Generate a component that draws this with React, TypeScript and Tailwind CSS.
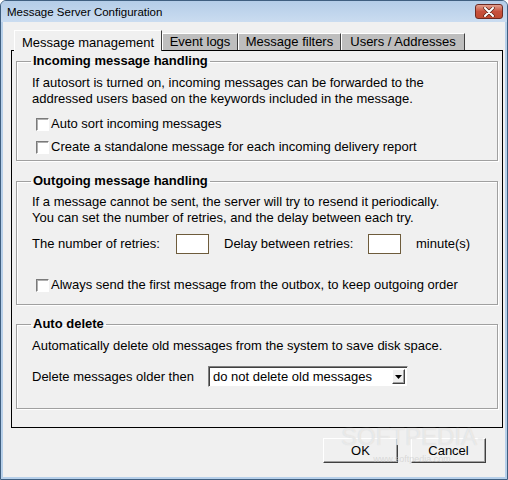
import React from 'react';

const tabs = [
  { label: 'Message management', width: 'w-[148px]', active: true },
  { label: 'Event logs', width: 'w-[76px]', active: false },
  { label: 'Message filters', width: 'w-[103px]', active: false },
  { label: 'Users / Addresses', width: 'w-[124px]', active: false },
];

function CheckBox({ label }: { label: string }) {
  return (
    <div className="flex items-center h-[16px] ml-[4px]">
      <span className="w-[13px] h-[13px] bg-white border border-t-[#7a7a7a] border-l-[#7a7a7a] border-b-white border-r-white shadow-[inset_1px_1px_0_#b0b0b0]" />
      <span className="ml-[2px]">{label}</span>
    </div>
  );
}

function GroupBox({ title, className, children }: { title: string; className?: string; children: React.ReactNode }) {
  return (
    <fieldset className={`border border-[#a0a0a0] shadow-[inset_1px_1px_0_#ffffff,1px_1px_0_#ffffff] ${className ?? ''}`}>
      <legend className="ml-[14px] px-[2px] font-bold leading-[16px]">{title}</legend>
      {children}
    </fieldset>
  );
}

function TextBox() {
  return <span className="w-[33px] h-[20px] bg-white border border-[#6e5c3c]" />;
}

function Button({ label }: { label: string }) {
  return (
    <button className="w-[75px] h-[25px] bg-[#f0f0f0] border border-t-white border-l-white border-b-[#404040] border-r-[#404040] shadow-[inset_-1px_-1px_0_#a0a0a0] text-[13px] leading-[16px]">
      {label}
    </button>
  );
}

export default function App() {
  return (
    <div className="relative w-[508px] h-[480px] flex flex-col bg-[#b7d0ea] border border-[#3f5f80] rounded-t-[6px] overflow-hidden font-['Liberation_Sans',Arial,sans-serif] text-[13px] text-black">
      {/* Title bar */}
      <div className="h-[21px] flex justify-between bg-gradient-to-b from-[#b4cde8] to-[#cadcf0] pl-[6px] pr-[4px]">
        <span className="self-center text-[11.5px] leading-[14px] mt-[1px]">Message Server Configuration</span>
        <span className="mt-[3px] w-[28px] h-[15px] rounded-[3px] border border-[#6e2a22] bg-gradient-to-b from-[#e2a08f] via-[#c7503c] to-[#c04a30] flex items-center justify-center">
          <svg width="12" height="10" viewBox="0 0 12 10">
            <path d="M2 1 L10 9 M10 1 L2 9" stroke="#5a2418" strokeWidth="3.4" strokeLinecap="round" />
            <path d="M2 1 L10 9 M10 1 L2 9" stroke="#ffffff" strokeWidth="2" strokeLinecap="round" />
          </svg>
        </span>
      </div>

      {/* Client area */}
      <div className="flex-1 flex flex-col mx-[2px] mb-[2px] bg-[#f0f0f0] pt-[8px] pl-[8px]">
        <div className="relative z-10 flex items-end h-[21px] ml-[3px]">
          {tabs.map((t) =>
            t.active ? (
              <div
                key={t.label}
                className={`${t.width} h-[21px] bg-[#f0f0f0] border-t border-l border-r border-t-white border-l-white border-r-[#404040] flex justify-center pt-[4px] leading-[16px]`}
              >
                {t.label}
              </div>
            ) : (
              <div
                key={t.label}
                className={`${t.width} h-[17px] mb-[1px] bg-[#bebebe] border-t border-l border-r border-t-white border-l-white border-r-[#404040] flex justify-center leading-[16px]`}
              >
                {t.label}
              </div>
            )
          )}
        </div>

        <div className="relative mt-[-1px] w-[492px] border border-black bg-[#f0f0f0] px-[4px] pt-[2px] pb-[18px]">
          <GroupBox title="Incoming message handling">
            <div className="pl-[15px] pt-[6px] pb-[5px] leading-[16px]">
              <p>If autosort is turned on, incoming messages can be forwarded to the</p>
              <p>addressed users based on the keywords included in the message.</p>
              <div className="mt-[9px]">
                <CheckBox label="Auto sort incoming messages" />
              </div>
              <div className="mt-[7px]">
                <CheckBox label="Create a standalone message for each incoming delivery report" />
              </div>
            </div>
          </GroupBox>

          <GroupBox title="Outgoing message handling" className="mt-[12px]">
            <div className="pl-[15px] pt-[5px] pb-[11px] leading-[16px]">
              <p>If a message cannot be sent, the server will try to resend it periodically.</p>
              <p>You can set the number of retries, and the delay between each try.</p>
              <div className="mt-[8px] flex items-center h-[20px]">
                <span className="w-[144px]">The number of retries:</span>
                <TextBox />
                <span className="ml-[15px] w-[144px]">Delay between retries:</span>
                <TextBox />
                <span className="ml-[15px]">minute(s)</span>
              </div>
              <div className="mt-[23px]">
                <CheckBox label="Always send the first message from the outbox, to keep outgoing order" />
              </div>
            </div>
          </GroupBox>

          <GroupBox title="Auto delete" className="mt-[11px]">
            <div className="pl-[15px] pt-[6px] pb-[21px] leading-[16px]">
              <p>Automatically delete old messages from the system to save disk space.</p>
              <div className="mt-[12px] flex items-center h-[21px]">
                <span className="w-[176px]">Delete messages older then</span>
                <div className="w-[200px] h-[21px] flex items-center bg-white border border-t-[#808080] border-l-[#808080] border-b-[#f0f0f0] border-r-[#f0f0f0] shadow-[inset_1px_1px_0_#404040]">
                  <span className="flex-1 pl-[4px]">do not delete old messages</span>
                  <span className="w-[13px] h-[15px] mr-[2px] bg-[#f0f0f0] border border-t-white border-l-white border-b-[#404040] border-r-[#404040] shadow-[inset_-1px_-1px_0_#a0a0a0] flex items-center justify-center">
                    <svg width="7" height="4" viewBox="0 0 7 4">
                      <path d="M0 0 H7 L3.5 4 Z" fill="#000000" />
                    </svg>
                  </span>
                </div>
              </div>
            </div>
          </GroupBox>
        </div>

        <div className="mt-[10px] flex justify-end gap-[13px] pr-[19px]">
          <Button label="OK" />
          <Button label="Cancel" />
        </div>
      </div>

      {/* watermark */}
      <div className="absolute left-[340px] top-[423px] flex flex-col items-center pointer-events-none">
        <span className="text-[24px] leading-[26px] text-white/50 [text-shadow:0_0_1px_#d0d0d0]">
          SOFTPEDIA<sup className="text-[6px]">™</sup>
        </span>
        <span className="text-[9px] leading-[10px] text-[#c8c8c8]/60 mt-[4px]">www.softpedia.com</span>
      </div>
    </div>
  );
}
